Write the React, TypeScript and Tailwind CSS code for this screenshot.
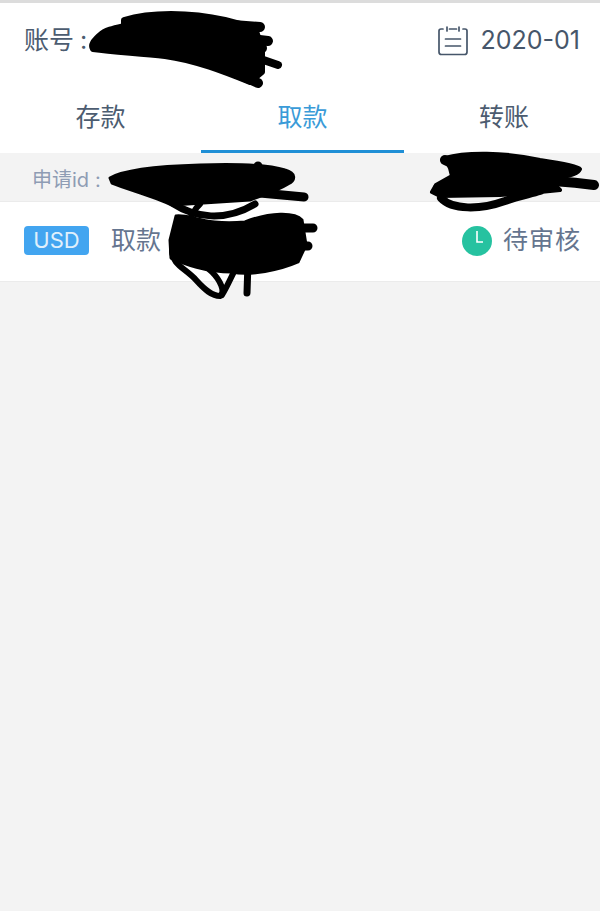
const cjk = "font-['Inter','Noto_Sans_CJK_SC',sans-serif]";

function Scribbles() {
  return (
    <svg className="absolute left-0 top-0 pointer-events-none" width="600" height="311" viewBox="0 0 600 311" fill="none" stroke="#000" strokeLinecap="round" strokeLinejoin="round">
      {/* account number */}
      <path fill="#000" strokeWidth="6" d="M124 20 C150 12 190 12 225 20 L255 28 L262 50 L262 72 L250 82 C225 72 195 60 165 56 C140 53 115 52 93 49 C90 44 95 40 100 35 C105 30 115 28 124 26 Z" />
      <g strokeWidth="10">
        <path d="M220 24 L260 27" />
        <path d="M225 36 L268 41" />
        <path d="M225 47 L262 48" />
        <path d="M238 74 L258 83" />
      </g>
      <path strokeWidth="8" d="M240 52 L278 65" />
      {/* request id and amount */}
      <path fill="#000" strokeWidth="3" d="M110 178 C125 169 165 166 200 165 C230 164 265 164 285 170 C296 173 296 180 288 184 C275 192 262 195 250 200 L172 205 C155 197 130 190 112 183 Z" />
      <path strokeWidth="9" d="M258 166 L258 172 M250 192 L304 197" />
      <path strokeWidth="7" d="M172 203 C195 218 225 222 255 204" />
      <path fill="#000" strokeWidth="3" d="M176 216 C190 214 205 226 245 222 C270 212 295 212 302 220 L306 245 L298 262 C280 270 250 276 232 272 C205 272 185 264 171 258 L170 240 Z" />
      <path strokeWidth="9" d="M270 228 L313 228 M270 246 L308 246" />
      <path strokeWidth="6" d="M172 250 C172 265 185 268 196 280 C205 290 212 296 220 296 C226 292 220 280 212 272 C205 265 195 258 178 250" />
      <path strokeWidth="7" d="M247 293 L248 262" />
      <path strokeWidth="6" d="M222 295 C228 285 232 275 236 268" />
      <path strokeWidth="6" d="M200 204 C188 215 185 235 188 250" />
      {/* right side note */}
      <path fill="#000" strokeWidth="4" d="M445 158 C465 152 505 152 540 160 C560 163 578 166 580 169 C578 175 565 176 550 180 L560 190 L530 193 L500 195 L440 196 L432 192 L436 185 L452 176 L450 168 Z" />
      <path strokeWidth="10" d="M445 160 L462 168 M438 188 C480 178 540 178 594 185" />
      <path strokeWidth="8" d="M441 198 C452 210 480 210 505 201 C515 197 530 194 540 191" />
    </svg>
  );
}

export default function App() {
  return (
    <div className={`relative w-[600px] h-[911px] overflow-hidden bg-[#f3f3f3] ${cjk}`}>
      <div className="h-[3px] bg-[#dcdcdc]" />
      <div className="bg-white">
        <div className="flex items-center justify-between h-[77px] pl-6 pr-5 pb-[2px]">
          <span className="text-[25px] text-[#4c5c70]">账号<span className="ml-[6px]">:</span></span>
          <div className="flex items-center gap-[13px]">
            <svg width="30" height="30" viewBox="0 0 30 30" fill="none" stroke="#46566a" strokeWidth="1.7" strokeLinecap="round">
              <path d="M5 3 H3 Q1 3 1 5 V26 Q1 28.5 3.5 28.5 H26.5 Q29 28.5 29 26 V5 Q29 3 27 3 H25" />
              <path d="M9 1 V5 M21 1 V5 M11.5 3 H18.5 M7.5 13 H22.5 M7.5 20 H22.5" />
            </svg>
            <span className="text-[25px] text-[#46566a]">2020-01</span>
          </div>
        </div>
        <div className="grid grid-cols-[201px_203px_196px] h-[73px]">
          <div className="flex items-center justify-center pt-[2px] text-[25px] text-[#4c5c70]">存款</div>
          <div className="relative flex items-center justify-center pt-[2px] text-[25px] text-[#3a9bd8]">
            取款
            <div className="absolute left-0 right-0 bottom-0 h-[3px] bg-[#1f8fd6]" />
          </div>
          <div className="flex items-center justify-center pl-[4px] pt-[2px] text-[25px] text-[#4c5c70]">转账</div>
        </div>
      </div>
      <div className="flex items-center h-[48px] pl-8 pt-[6px] text-[20px] text-[#8e9cb4]">申请id<span className="ml-[6px]">:</span></div>
      <div className="flex items-center justify-between h-[81px] bg-white border-y border-[#ebebeb] pl-6 pr-[19px] pb-[2px]">
        <div className="flex items-center gap-[22px]">
          <span className="flex items-center justify-center w-[65px] h-[29px] rounded-[4px] bg-[#42a5f0] text-[22px] text-[#e0f0fc]">USD</span>
          <span className="text-[25px] text-[#65758f]">取款</span>
        </div>
        <div className="flex items-center gap-[11px]">
          <svg width="30" height="30" viewBox="0 0 30 30">
            <circle cx="15" cy="15" r="15" fill="#26c2a0" />
            <path d="M15 5 V16 H21" fill="none" stroke="#fff" strokeWidth="1.6" />
          </svg>
          <span className="text-[25px] text-[#65758f] tracking-[1px]">待审核</span>
        </div>
      </div>
      <Scribbles />
    </div>
  );
}
